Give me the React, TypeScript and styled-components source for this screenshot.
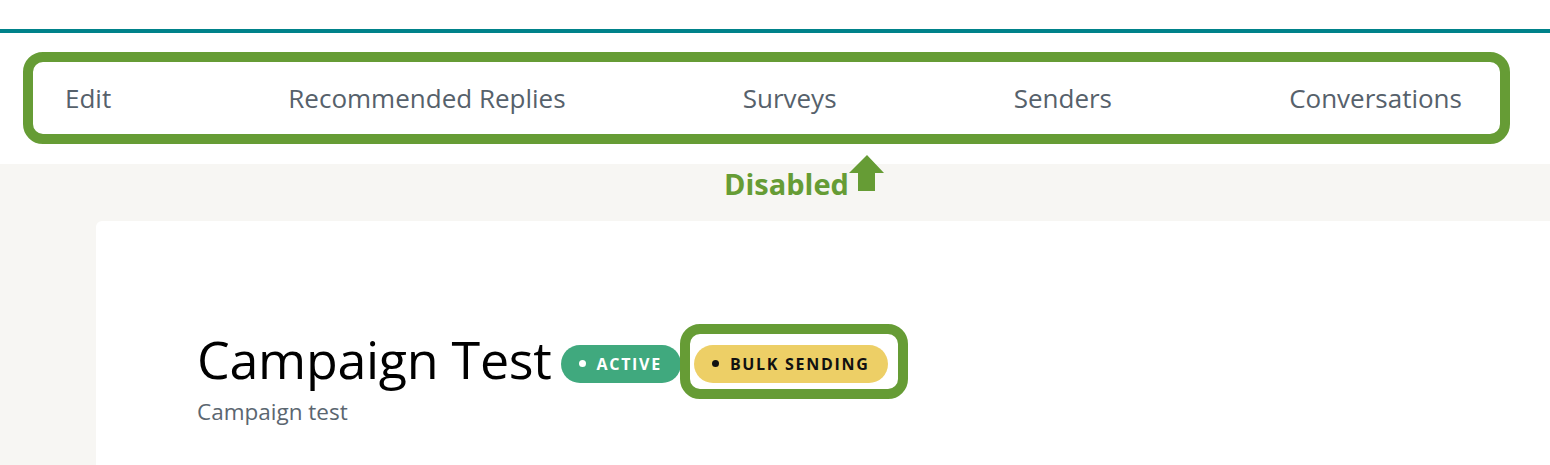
import React from "react";
import styled, { createGlobalStyle } from "styled-components";

const Global = createGlobalStyle`
  html, body { margin: 0; padding: 0; background: #ffffff; }
  body { font-family: "Open Sans", "Noto Sans", sans-serif; overflow: hidden; }
  * { box-sizing: border-box; }
`;

const Page = styled.div`
  width: 1550px;
  height: 465px;
  display: flex;
  flex-direction: column;
  overflow: hidden;
`;

const TopSpace = styled.div`
  flex: 0 0 29px;
  background: #ffffff;
`;

const AccentLine = styled.div`
  flex: 0 0 4px;
  background: #00828a;
`;

const NavSection = styled.div`
  flex: 0 0 131px;
  padding: 19px 0 0 23px;
  background: #ffffff;
`;

const NavFrame = styled.nav`
  width: 1487px;
  height: 92px;
  border: 10px solid #669c35;
  border-radius: 20px;
  display: flex;
  align-items: center;
  justify-content: space-between;
  padding: 0 38px 0 32px;
`;

const NavItem = styled.a`
  font-family: "Open Sans", sans-serif;
  font-size: 26px;
  color: #56616b;
  text-decoration: none;
  white-space: nowrap;
`;

const Body = styled.div`
  flex: 1 1 auto;
  min-height: 0;
  background: #f7f6f3;
  position: relative;
  padding: 57px 0 0 96px;
`;

const DisabledNote = styled.div`
  position: absolute;
  left: 724px;
  top: -9px;
  display: flex;
  align-items: flex-start;
  color: #669c35;
  font-family: "Open Sans", sans-serif;
  font-weight: 700;
  font-size: 29px;
  line-height: 1;
`;

const NoteText = styled.span`
  margin-top: 14px;
`;

const Card = styled.section`
  background: #ffffff;
  border-radius: 6px 0 0 0;
  height: 300px;
  padding: 105px 0 0 101px;
`;

const TitleRow = styled.div`
  display: flex;
  align-items: center;
  gap: 9px;
`;

const Title = styled.h1`
  margin: 0;
  font-family: "Open Sans", sans-serif;
  font-weight: 400;
  font-size: 52px;
  line-height: 66px;
  color: #000000;
  letter-spacing: -0.3px;
`;

const Badges = styled.div`
  display: flex;
  align-items: center;
  gap: 13px;
  margin-top: 9px;
`;

const Badge = styled.span<{ $tone: "green" | "yellow" }>`
  display: inline-flex;
  align-items: center;
  gap: 11px;
  height: 38px;
  padding: 0 19px 0 18px;
  border-radius: 19px;
  background: ${(p) => (p.$tone === "green" ? "#40a97e" : "#edcf66")};
  color: ${(p) => (p.$tone === "green" ? "#ffffff" : "#111111")};
  font-family: "Open Sans", sans-serif;
  font-weight: 700;
  font-size: 16px;
  letter-spacing: 1.7px;
  white-space: nowrap;
`;

const Dot = styled.span<{ $color: string }>`
  width: 7px;
  height: 7px;
  border-radius: 50%;
  background: ${(p) => p.$color};
`;

const Highlighted = styled.span`
  position: relative;
  display: inline-flex;
  &::after {
    content: "";
    position: absolute;
    top: -21px;
    bottom: -16px;
    left: -14px;
    right: -20px;
    border: 10px solid #669c35;
    border-radius: 20px;
    pointer-events: none;
  }
`;

const Subtitle = styled.p`
  margin: 4px 0 0;
  font-family: "Open Sans", sans-serif;
  font-size: 22.5px;
  color: #5b6670;
`;

const UpArrow = () => (
  <svg width="36" height="37" viewBox="0 0 36 37" style={{ display: "block" }}>
    <path d="M18 0 L35 18 L26 18 L26 36 L9 36 L9 18 L0 18 Z" fill="#669c35" />
  </svg>
);

export default function App() {
  const items = ["Edit", "Recommended Replies", "Surveys", "Senders", "Conversations"];
  return (
    <>
      <Global />
      <Page>
        <TopSpace />
        <AccentLine />
        <NavSection>
          <NavFrame>
            {items.map((i) => (
              <NavItem key={i}>{i}</NavItem>
            ))}
          </NavFrame>
        </NavSection>
        <Body>
          <DisabledNote>
            <NoteText>Disabled</NoteText>
            <UpArrow />
          </DisabledNote>
          <Card>
            <TitleRow>
              <Title>Campaign Test</Title>
              <Badges>
                <Badge $tone="green">
                  <Dot $color="#ffffff" />
                  ACTIVE
                </Badge>
                <Highlighted>
                  <Badge $tone="yellow">
                    <Dot $color="#111111" />
                    BULK SENDING
                  </Badge>
                </Highlighted>
              </Badges>
            </TitleRow>
            <Subtitle>Campaign test</Subtitle>
          </Card>
        </Body>
      </Page>
    </>
  );
}
